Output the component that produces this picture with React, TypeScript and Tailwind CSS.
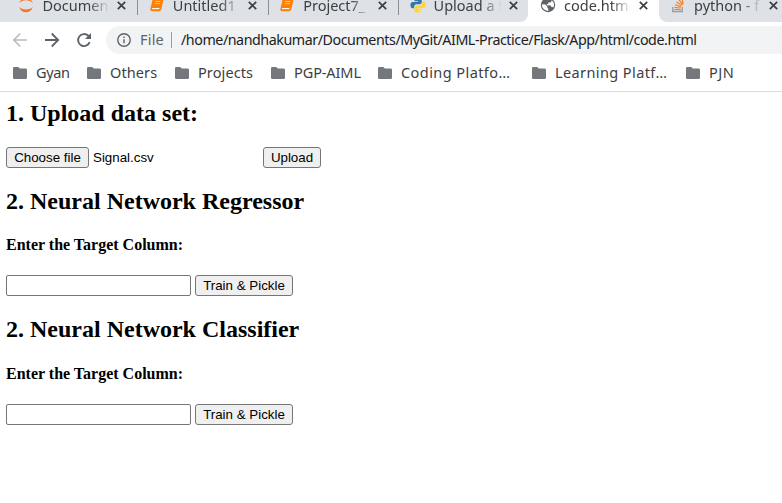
import { ReactNode } from 'react';

const ui = "font-['Noto_Sans','Open_Sans',sans-serif]";

function Close() {
  return (
    <svg className="h-[9px] w-[9px] shrink-0" viewBox="0 0 9 9" fill="none" stroke="#3c4043" strokeWidth="1.7">
      <path d="M.8.8l7.4 7.4M8.2.8L.8 8.2" />
    </svg>
  );
}

function Jupyter() {
  return (
    <svg className="h-4 w-4" viewBox="0 0 16 16" fill="#f37726">
      <path d="M1.2 9.700c1.2 1.800 3.800 2.700 6.800 2.700s5.600-.9 6.800-2.700c-1 3.600-3.700 5.600-6.800 5.600s-5.800-2-6.800-5.600z" />
      <path d="M1.200 6.200C2.300 2.800 5 .9 8 .9s5.700 1.900 6.800 5.300C13.300 4.200 11 3.200 8 3.200s-5.300 1-6.800 3z" />
    </svg>
  );
}

function Notebook() {
  return (
    <svg className="h-4 w-4" viewBox="0 0 16 16">
      <path d="M5.200 1.200h8q1.700 0 1.300 1.500l-2.300 9.900q-.4 1.700-2.100 1.700H3.200q-2.300 0-1.800-2.200L3.500 2.900q.4-1.700 1.700-1.700z" fill="#ff7f00" />
      <path d="M6.300 4.500h5.200M5.800 6.700h5.200" stroke="#ffd9b3" strokeWidth=".8" />
      <path d="M3 11.600h7.400" stroke="#fff" strokeWidth="1.100" />
    </svg>
  );
}

function Python() {
  return (
    <svg className="h-4 w-4" viewBox="0 0 16 16">
      <path d="M7.900.4C5 .4 4.500 1.600 4.500 2.600v1.600H8v.7H2.800C1.200 4.900.4 6.200.4 8s.8 3.300 2.200 3.300h1.600V9.500c0-1.300 1-2.300 2.300-2.300h3.300c1.100 0 1.900-.9 1.900-1.900V2.600C11.700 1.200 10.300.4 7.900.4z" fill="#3776ab" />
      <path d="M8.100 15.600c2.900 0 3.400-1.200 3.400-2.200v-1.600H8v-.7h5.200c1.600 0 2.400-1.300 2.400-3.100s-.8-3.300-2.200-3.300h-1.200v1.800c0 1.300-1 2.300-2.300 2.300H6.300c-1.100 0-1.900.9-1.900 1.900v2.700c0 1.400 1.300 2.200 3.700 2.200z" fill="#ffd43b" />
      <circle cx="6.300" cy="2.400" r=".7" fill="#fff" />
      <circle cx="9.700" cy="13.600" r=".7" fill="#fff" />
    </svg>
  );
}

function Globe() {
  return (
    <svg className="h-4 w-4" viewBox="0 0 16 16">
      <circle cx="8" cy="8" r="7.200" fill="#5f6368" />
      <path d="M2.300 7.200l3 .3 2 2.100v1.300l1 .9v2.100C4.700 13.700 2 11.200 2 8.300z" fill="#fff" />
      <path d="M9.700 2.300l2.200 1.400-1.500 1.700H8.300v1.500H6.900v1.300h3.500l1 1.900h1.200l.6.7c1.500-2.600 1-5.400-1.300-7.300z" fill="#fff" />
    </svg>
  );
}

function StackOverflow() {
  return (
    <svg className="h-4 w-4" viewBox="0 0 16 16" fill="none">
      <path d="M2.700 10v4.500h9.600V10" stroke="#9a9c9f" strokeWidth="1.300" />
      <path d="M4.300 12.500h6.500M4.400 10.300l6.400.7M5 7.700l6.200 1.900M6.500 5l5.500 3.300M8.800 2.500l4.100 5M11.900.8l1.300 6.100" stroke="#f48024" strokeWidth="1.200" />
    </svg>
  );
}

function Tab({ icon, title, active }: { icon: ReactNode; title: string; active?: boolean }) {
  return (
    <div className={`flex h-[34px] w-[130.4px] shrink-0 items-center pl-[11px] ${active ? 'bg-white' : ''}`}>
      <div className="w-4 shrink-0">{icon}</div>
      <div className="ml-2 w-[69px] whitespace-nowrap text-[14.5px] leading-5 text-[#3c4043] [mask-image:linear-gradient(to_right,black_68%,transparent_98%)]">
        {title}
      </div>
      <div className="ml-[6px] flex items-center"><Close /></div>
    </div>
  );
}

function Divider() {
  return <div className="-mx-[0.5px] h-5 w-px shrink-0 bg-[#8b8f94]" />;
}

function Folder() {
  return (
    <svg className="mt-[5px] h-3 w-[14px] shrink-0" viewBox="0 0 14 12" fill="#74787c">
      <path d="M1.300 0h4l1.500 1.600h5.900q1.300 0 1.300 1.300v7.800q0 1.300-1.300 1.300H1.300Q0 12 0 10.700V1.300Q0 0 1.300 0z" />
    </svg>
  );
}

function Bookmark({ label, width }: { label: string; width: string }) {
  return (
    <div className={`flex shrink-0 items-start gap-[9px] whitespace-nowrap text-[14.5px] leading-5 text-[#3c4043] ${width}`}>
      <Folder />
      <span>{label}</span>
    </div>
  );
}

const buttonClass =
  "h-[21px] rounded-[3px] border border-[#767676] bg-[#efefef] text-center font-['Liberation_Sans',Arial,sans-serif] text-[13.333px] leading-[15px] text-black";

function Trainer({ title }: { title: string }) {
  return (
    <section>
      <h2 className="mt-5 h-[27px] text-2xl leading-[27px] font-bold">{title}</h2>
      <h4 className="mt-[21.2px] text-base leading-[18px] font-bold">Enter the Target Column:</h4>
      <div className="mt-[21.2px] flex gap-1">
        <input className="h-[21px] w-[185px] rounded-[2px] border border-[#767676] bg-white" />
        <button className={`${buttonClass} w-[98px]`}>Train &amp; Pickle</button>
      </div>
    </section>
  );
}

export default function App() {
  return (
    <div className="h-[503px] w-[782px] overflow-hidden bg-white">
      <header className={ui}>
        <div className="flex h-[22px] overflow-hidden">
          <div className="flex h-[22px] w-[528px] shrink-0 rounded-br-lg bg-[#dee1e6] pl-[7.4px]">
            <div className="-mt-3 flex items-center">
              <Tab icon={<Jupyter />} title="Documen" />
              <Divider />
              <Tab icon={<Notebook />} title="Untitled1" />
              <Divider />
              <Tab icon={<Notebook />} title="Project7_" />
              <Divider />
              <Tab icon={<Python />} title="Upload a f" />
            </div>
          </div>
          <div className="-mt-3 w-[131px] shrink-0 pl-px">
            <Tab icon={<Globe />} title="code.htm" active />
          </div>
          <div className="h-[22px] w-[123px] overflow-hidden rounded-bl-lg bg-[#dee1e6]">
            <div className="-mt-3">
              <Tab icon={<StackOverflow />} title="python - f" />
            </div>
          </div>
        </div>

        <div className="flex h-9 items-center pl-3">
          <svg className="h-4 w-4 shrink-0" viewBox="0 0 16 16" fill="none" stroke="#babcbe" strokeWidth="1.700">
            <path d="M15 8H2M8.300 1.500L1.800 8l6.500 6.500" />
          </svg>
          <svg className="ml-4 h-4 w-4 shrink-0" viewBox="0 0 16 16" fill="none" stroke="#5f6368" strokeWidth="1.800">
            <path d="M1 8h13M7.700 1.500L14.200 8l-6.500 6.500" />
          </svg>
          <svg className="ml-4 h-4 w-4 shrink-0" viewBox="0 0 16 16" fill="none">
            <path d="M13.700 10.200A6 6 0 1 1 12.300 3.800L14 5.500" stroke="#5f6368" strokeWidth="1.900" />
            <path d="M15 1v6H9z" fill="#5f6368" />
          </svg>
          <div className="ml-[14px] flex h-7 flex-1 items-center rounded-l-full bg-[#f1f3f4] pl-[11px] text-[14.500px] whitespace-nowrap">
            <svg className="h-[14px] w-[14px] shrink-0" viewBox="0 0 14 14" fill="none" stroke="#5f6368" strokeWidth="1.400">
              <circle cx="7" cy="7" r="6.200" />
              <path d="M7 6.200v4M7 3.500v1.400" />
            </svg>
            <span className="ml-[9px] w-[31px] shrink-0 tracking-[0.2px] text-[#5f6368]">File</span>
            <div className="h-4 w-px shrink-0 bg-[#9a9da1]" />
            <span className="ml-[9px] text-[14.25px] tracking-[-0.44px] text-[#202124]">/home/nandhakumar/Documents/MyGit/AIML-Practice/Flask/App/html/code.html</span>
          </div>
        </div>

        <div className="flex h-[34px] items-start border-b border-[#dadce0] pt-[4px] pl-[13px]">
          <Bookmark label="Gyan" width="w-[74px] tracking-[-0.4px]" />
          <Bookmark label="Others" width="w-[88px] tracking-[0.1px]" />
          <Bookmark label="Projects" width="w-[96px] tracking-[0.1px]" />
          <Bookmark label="PGP-AIML" width="w-[107px] tracking-[-0.1px]" />
          <Bookmark label="Coding Platfo…" width="w-[154px] tracking-[0.43px]" />
          <Bookmark label="Learning Platf…" width="w-[154px] tracking-[0.4px]" />
          <Bookmark label="PJN" width="w-[60px] tracking-[0.5px]" />
        </div>
      </header>

      <main className="px-1.5 pt-2 font-['Liberation_Serif','Times_New_Roman',serif] text-black">
        <h2 className="text-2xl leading-[27px] font-bold">1. Upload data set:</h2>
        <div className="mt-5 flex items-center font-['Liberation_Sans',Arial,sans-serif] text-[13.333px] leading-[15px]">
          <button className={`${buttonClass} w-[83px]`}>Choose file</button>
          <span className="ml-1 w-[170px]">Signal.csv</span>
          <button className={`${buttonClass} w-[58px]`}>Upload</button>
        </div>
        <Trainer title="2. Neural Network Regressor" />
        <Trainer title="2. Neural Network Classifier" />
      </main>
    </div>
  );
}
